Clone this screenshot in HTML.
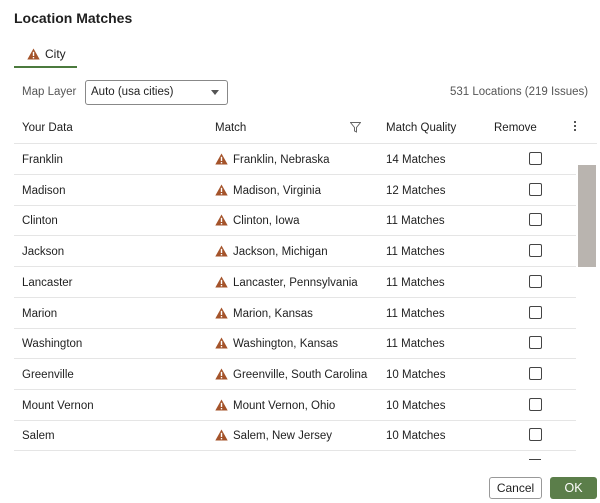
<!DOCTYPE html><html><head><style>
body{margin:0;width:600px;height:503px;background:#fff;font-family:"Liberation Sans",sans-serif;font-size:11.5px;color:#1f1f1f;position:relative;overflow:hidden}
.a{position:absolute;white-space:nowrap}
.warn{display:inline-block;width:13px;height:12px;vertical-align:-2px;margin-right:5px}
.row{position:absolute;left:14px;width:562px;height:30px;border-bottom:1px solid #e5e5e5;line-height:31px}
.row span{position:absolute;top:1px;white-space:nowrap}
.cb{position:absolute;left:515px;top:8px;width:11px;height:11px;border:1px solid #444;border-radius:2px}
</style></head><body>
<div class="a" style="left:14px;top:10px;font-weight:bold;font-size:14px">Location Matches</div>
<div class="a" style="left:27px;top:47px;font-size:12px"><svg class="warn" viewBox="0 0 13 12"><path d="M6.5 0.5L12.7 11.5H0.3Z" fill="#a4532a"/><rect x="5.8" y="3.8" width="1.4" height="4.2" fill="#fff"/><rect x="5.8" y="9" width="1.4" height="1.4" fill="#fff"/></svg>City</div>
<div class="a" style="left:14px;top:66px;width:63px;height:2px;background:#4b7a3d"></div>
<div class="a" style="left:22px;top:86px;color:#555">Map Layer</div>
<div class="a" style="left:85px;top:80px;width:141px;height:23px;border:1px solid #888;border-radius:3px"></div>
<div class="a" style="left:91px;top:86px">Auto (usa cities)</div>
<div class="a" style="left:211px;top:90px;width:0;height:0;border-left:4px solid transparent;border-right:4px solid transparent;border-top:5px solid #555"></div>
<div class="a" style="left:450px;top:86px;color:#555">531 Locations (219 Issues)</div>
<div class="a" style="left:22px;top:122px">Your Data</div>
<div class="a" style="left:215px;top:122px">Match</div>
<svg class="a" style="left:350px;top:122px" width="11" height="11" viewBox="0 0 11 11"><path d="M0.5 0.5H10.5L6.5 5.5V10L4.5 9V5.5Z" fill="none" stroke="#666"/></svg>
<div class="a" style="left:386px;top:122px">Match Quality</div>
<div class="a" style="left:494px;top:122px">Remove</div>
<div class="a" style="left:574px;top:121px;width:2px;height:2px;background:#555;box-shadow:0 4px #555,0 8px #555"></div>
<div class="a" style="left:14px;top:143px;width:583px;height:1px;background:#e5e5e5"></div>
<div class="row" style="top:144px"><span style="left:8px">Franklin</span><span style="left:201px"><svg class="warn" viewBox="0 0 13 12"><path d="M6.5 0.5L12.7 11.5H0.3Z" fill="#a4532a"/><rect x="5.8" y="3.8" width="1.4" height="4.2" fill="#fff"/><rect x="5.8" y="9" width="1.4" height="1.4" fill="#fff"/></svg>Franklin, Nebraska</span><span style="left:372px">14 Matches</span><i class="cb"></i></div>
<div class="row" style="top:174.7px"><span style="left:8px">Madison</span><span style="left:201px"><svg class="warn" viewBox="0 0 13 12"><path d="M6.5 0.5L12.7 11.5H0.3Z" fill="#a4532a"/><rect x="5.8" y="3.8" width="1.4" height="4.2" fill="#fff"/><rect x="5.8" y="9" width="1.4" height="1.4" fill="#fff"/></svg>Madison, Virginia</span><span style="left:372px">12 Matches</span><i class="cb"></i></div>
<div class="row" style="top:205.4px"><span style="left:8px">Clinton</span><span style="left:201px"><svg class="warn" viewBox="0 0 13 12"><path d="M6.5 0.5L12.7 11.5H0.3Z" fill="#a4532a"/><rect x="5.8" y="3.8" width="1.4" height="4.2" fill="#fff"/><rect x="5.8" y="9" width="1.4" height="1.4" fill="#fff"/></svg>Clinton, Iowa</span><span style="left:372px">11 Matches</span><i class="cb"></i></div>
<div class="row" style="top:236.1px"><span style="left:8px">Jackson</span><span style="left:201px"><svg class="warn" viewBox="0 0 13 12"><path d="M6.5 0.5L12.7 11.5H0.3Z" fill="#a4532a"/><rect x="5.8" y="3.8" width="1.4" height="4.2" fill="#fff"/><rect x="5.8" y="9" width="1.4" height="1.4" fill="#fff"/></svg>Jackson, Michigan</span><span style="left:372px">11 Matches</span><i class="cb"></i></div>
<div class="row" style="top:266.8px"><span style="left:8px">Lancaster</span><span style="left:201px"><svg class="warn" viewBox="0 0 13 12"><path d="M6.5 0.5L12.7 11.5H0.3Z" fill="#a4532a"/><rect x="5.8" y="3.8" width="1.4" height="4.2" fill="#fff"/><rect x="5.8" y="9" width="1.4" height="1.4" fill="#fff"/></svg>Lancaster, Pennsylvania</span><span style="left:372px">11 Matches</span><i class="cb"></i></div>
<div class="row" style="top:297.5px"><span style="left:8px">Marion</span><span style="left:201px"><svg class="warn" viewBox="0 0 13 12"><path d="M6.5 0.5L12.7 11.5H0.3Z" fill="#a4532a"/><rect x="5.8" y="3.8" width="1.4" height="4.2" fill="#fff"/><rect x="5.8" y="9" width="1.4" height="1.4" fill="#fff"/></svg>Marion, Kansas</span><span style="left:372px">11 Matches</span><i class="cb"></i></div>
<div class="row" style="top:328.2px"><span style="left:8px">Washington</span><span style="left:201px"><svg class="warn" viewBox="0 0 13 12"><path d="M6.5 0.5L12.7 11.5H0.3Z" fill="#a4532a"/><rect x="5.8" y="3.8" width="1.4" height="4.2" fill="#fff"/><rect x="5.8" y="9" width="1.4" height="1.4" fill="#fff"/></svg>Washington, Kansas</span><span style="left:372px">11 Matches</span><i class="cb"></i></div>
<div class="row" style="top:358.9px"><span style="left:8px">Greenville</span><span style="left:201px"><svg class="warn" viewBox="0 0 13 12"><path d="M6.5 0.5L12.7 11.5H0.3Z" fill="#a4532a"/><rect x="5.8" y="3.8" width="1.4" height="4.2" fill="#fff"/><rect x="5.8" y="9" width="1.4" height="1.4" fill="#fff"/></svg>Greenville, South Carolina</span><span style="left:372px">10 Matches</span><i class="cb"></i></div>
<div class="row" style="top:389.6px"><span style="left:8px">Mount Vernon</span><span style="left:201px"><svg class="warn" viewBox="0 0 13 12"><path d="M6.5 0.5L12.7 11.5H0.3Z" fill="#a4532a"/><rect x="5.8" y="3.8" width="1.4" height="4.2" fill="#fff"/><rect x="5.8" y="9" width="1.4" height="1.4" fill="#fff"/></svg>Mount Vernon, Ohio</span><span style="left:372px">10 Matches</span><i class="cb"></i></div>
<div class="row" style="top:420.3px"><span style="left:8px">Salem</span><span style="left:201px"><svg class="warn" viewBox="0 0 13 12"><path d="M6.5 0.5L12.7 11.5H0.3Z" fill="#a4532a"/><rect x="5.8" y="3.8" width="1.4" height="4.2" fill="#fff"/><rect x="5.8" y="9" width="1.4" height="1.4" fill="#fff"/></svg>Salem, New Jersey</span><span style="left:372px">10 Matches</span><i class="cb"></i></div>
<div class="a" style="left:529px;top:459px;width:12px;height:1px;background:#444"></div>
<div class="a" style="left:578px;top:165px;width:18px;height:102px;background:#b9b4af"></div>
<div class="a" style="left:489px;top:477px;width:51px;height:20px;border:1px solid #999;border-radius:3px;text-align:center;line-height:20px;font-size:12px">Cancel</div>
<div class="a" style="left:550px;top:477px;width:47px;height:22px;background:#5b7e4a;border-radius:3px;text-align:center;line-height:22px;font-size:12.5px;color:#fff">OK</div>
</body></html>
